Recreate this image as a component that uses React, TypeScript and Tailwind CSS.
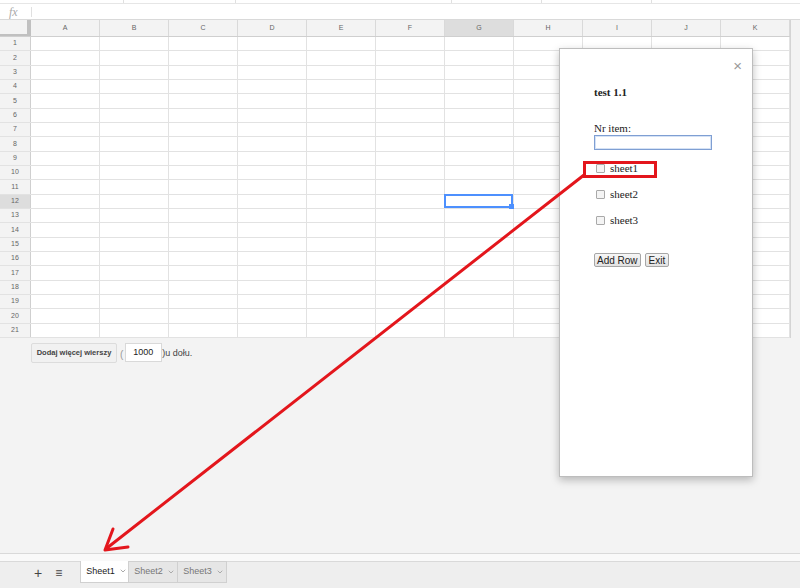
import { ChevronDown } from 'lucide-react';

const COLS = ['A', 'B', 'C', 'D', 'E', 'F', 'G', 'H', 'I', 'J', 'K'];
const ROWS = Array.from({ length: 21 }, (_, i) => i + 1);
const SHEETS = ['sheet1', 'sheet2', 'sheet3'];

function Grid() {
  return (
    <div className="w-[791px] border-r border-[#d4d4d4] bg-white">
      {/* column headers */}
      <div className="grid h-[17px] grid-cols-[31px_repeat(11,69px)] border-b border-[#cfcfcf] bg-[#f3f3f3]">
        <div className="border-r-4 border-b-2 border-[#c0c0c0] bg-[#f3f3f3]" />
        {COLS.map((c) => (
          <div
            key={c}
            className={`flex items-center justify-center border-r border-[#d9d9d9] text-[7px] text-[#666] ${
              c === 'G' ? 'bg-[#dddddd]' : ''
            }`}
          >
            {c}
          </div>
        ))}
      </div>
      {ROWS.map((r) => (
        <div key={r} className="grid h-[14.33px] grid-cols-[31px_repeat(11,69px)] border-b border-[#e2e2e2]">
          <div
            className={`flex items-center justify-center border-r border-[#cfcfcf] text-[7px] text-[#666] ${
              r === 12 ? 'bg-[#dddddd]' : 'bg-[#f3f3f3]'
            }`}
          >
            {r}
          </div>
          {COLS.map((c) => (
            <div key={c} className="relative border-r border-[#e2e2e2]">
              {r === 12 && c === 'G' && (
                <div className="absolute -left-px -top-px right-0 bottom-0 border-2 border-[#4d90fe]">
                  <div className="absolute -right-[3px] -bottom-[3px] h-[5px] w-[5px] bg-[#4d90fe]" />
                </div>
              )}
            </div>
          ))}
        </div>
      ))}
    </div>
  );
}

function Dialog() {
  return (
    <div className="absolute left-[559px] top-[48px] h-[429px] w-[194px] border border-[#bdbdbd] bg-white shadow-[0_3px_8px_rgba(0,0,0,0.25)] font-['Liberation_Serif',serif] text-[11px] text-[#222]">
      <div className="absolute right-[10px] top-[9px] text-[15px] leading-none text-[#999] font-['Liberation_Sans',sans-serif]">×</div>
      <div className="pl-[34px] pt-[38px]">
        <div className="font-bold leading-none">test 1.1</div>
        <div className="mt-[25px] leading-none">Nr item:</div>
        <div className="mt-[1px] h-[15px] w-[118px] border border-[#7f9fd3] bg-white shadow-[inset_0_0_0_1px_#d5e2f5]" />
        <div className="mt-[13px] flex flex-col gap-[15px]">
          {SHEETS.map((s) => (
            <div key={s} className="flex items-center gap-[5px] pl-[2px] leading-none">
              <div className="h-[9px] w-[9px] rounded-[1px] border border-[#a9a9a9] bg-[#f4f4f4]" />
              <span>{s}</span>
            </div>
          ))}
        </div>
        <div className="mt-[27px] flex gap-[4px] font-['Liberation_Sans',sans-serif] text-[10px] text-[#222]">
          <div className="flex h-[14px] items-center rounded-[2px] border border-[#a6a6a6] bg-[linear-gradient(#f6f6f6,#e2e2e2)] px-[2px]">Add Row</div>
          <div className="flex h-[14px] items-center rounded-[2px] border border-[#a6a6a6] bg-[linear-gradient(#f6f6f6,#e2e2e2)] px-[3px]">Exit</div>
        </div>
      </div>
    </div>
  );
}

function Tabs() {
  return (
    <div className="flex h-[26px] items-start bg-[#eeeeee] pl-[31px]">
      <div className="flex h-[22px] items-center gap-[13px] pl-[3px] text-[#444]">
        <span className="text-[14px] leading-none">+</span>
        <span className="text-[12px] leading-none">≡</span>
      </div>
      <div className="-mt-px ml-[18px] flex">
        {['Sheet1', 'Sheet2', 'Sheet3'].map((s, i) => (
          <div
            key={s}
            className={`flex h-[22px] w-[49px] items-center gap-[4px] border border-[#d0d0d0] pl-[5px] text-[9px] ${
              i === 0 ? 'border-t-0 bg-white text-[#222]' : 'border-l-0 bg-[#e6e6e6] text-[#777]'
            }`}
          >
            {s}
            <ChevronDown size={8} strokeWidth={3} className="text-[#aaa]" />
          </div>
        ))}
      </div>
    </div>
  );
}

export default function App() {
  return (
    <div className="relative h-[588px] w-[800px] overflow-hidden bg-[#f3f3f3] font-['Liberation_Sans',Arial,sans-serif]">
      {/* toolbar remnant */}
      <div className="flex h-[4px] border-b border-[#e6e6e6] bg-white">
        <div className="w-[124px] border-r border-[#e0e0e0]" />
        <div className="w-[112px] border-r border-[#e0e0e0]" />
        <div className="w-[216px] border-r border-[#e0e0e0]" />
        <div className="w-[90px] border-r border-[#e0e0e0]" />
        <div className="w-[110px] border-r border-[#e0e0e0]" />
      </div>
      {/* formula bar */}
      <div className="flex h-[16px] items-center border-b border-[#d9d9d9] bg-white">
        <div className="flex w-[31px] items-center pl-[9px] font-['Liberation_Serif',serif] text-[12px] italic text-[#aaa]">fx</div>
        <div className="h-[10px] border-l border-[#e0e0e0]" />
      </div>

      <Grid />

      <div className="flex h-[215px] items-start pl-[31px] pt-[5px] text-[9px] text-[#444]">
        <div className="flex h-[20px] w-[86px] items-center justify-center rounded-[2px] border border-[#dcdcdc] bg-[#f1f1f1] text-[7.5px] font-bold text-[#444]">
          Dodaj więcej wierszy
        </div>
        <span className="ml-[3px] mt-[4px] text-[10px] text-[#999]">(</span>
        <div className="ml-[2px] flex h-[19px] w-[37px] items-center border border-[#d9d9d9] bg-white pl-[7px] text-[9px] text-[#222]">1000</div>
        <span className="mt-[4px] text-[9px]">)u dołu.</span>
      </div>

      {/* horizontal scrollbar */}
      <div className="h-[9px] border-y border-[#d9d9d9] bg-[#f9f9f9]" />
      <Tabs />

      <Dialog />

      {/* red annotations */}
      <div className="pointer-events-none absolute left-[583px] top-[161px] h-[17px] w-[74px] border-[3px] border-[#e3161c]" />
      <svg className="pointer-events-none absolute inset-0" width="800" height="588">
        <line x1="584" y1="175" x2="107" y2="548" stroke="#e3161c" strokeWidth="3" strokeLinecap="round" />
        <polyline points="113,529 105,550 128,547" fill="none" stroke="#e3161c" strokeWidth="3" strokeLinecap="round" strokeLinejoin="round" />
      </svg>
    </div>
  );
}
